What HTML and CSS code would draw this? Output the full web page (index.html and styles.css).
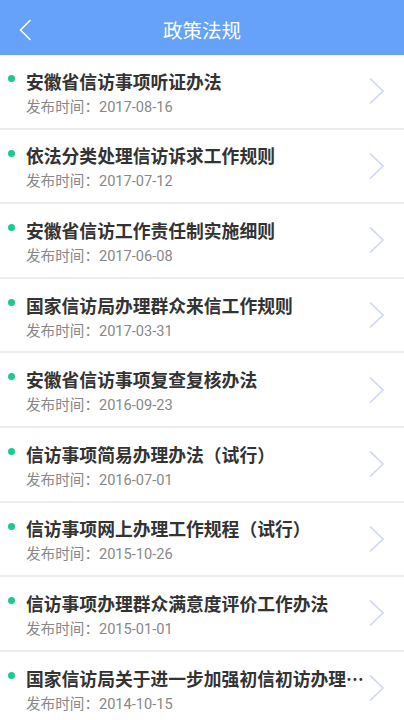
FILE: index.html
```html
<!DOCTYPE html>
<html lang="zh-CN">
<head>
<meta charset="utf-8">
<title>政策法规</title>
<link rel="stylesheet" href="styles.css">
</head>
<body>
<header class="topbar">
  <span class="back">
    <svg width="14" height="22" viewBox="0 0 14 22"><path d="M12 1.5 L2.5 11 L12 20.5" fill="none" stroke="#fff" stroke-width="1.6" stroke-linecap="round" stroke-linejoin="round"/></svg>
  </span>
  <h1 class="title">政策法规</h1>
</header>
<ul class="list">
  <li class="item"><div class="text"><div class="name">安徽省信访事项听证办法</div><div class="date">发布时间：2017-08-16</div></div><span class="chev"><svg width="17" height="28" viewBox="0 0 17 28"><path d="M2 1.5 L15 14 L2 26.5" fill="none" stroke="#cfd6f6" stroke-width="1.6"/></svg></span></li>
  <li class="item"><div class="text"><div class="name">依法分类处理信访诉求工作规则</div><div class="date">发布时间：2017-07-12</div></div><span class="chev"><svg width="17" height="28" viewBox="0 0 17 28"><path d="M2 1.5 L15 14 L2 26.5" fill="none" stroke="#cfd6f6" stroke-width="1.6"/></svg></span></li>
  <li class="item"><div class="text"><div class="name">安徽省信访工作责任制实施细则</div><div class="date">发布时间：2017-06-08</div></div><span class="chev"><svg width="17" height="28" viewBox="0 0 17 28"><path d="M2 1.5 L15 14 L2 26.5" fill="none" stroke="#cfd6f6" stroke-width="1.6"/></svg></span></li>
  <li class="item"><div class="text"><div class="name">国家信访局办理群众来信工作规则</div><div class="date">发布时间：2017-03-31</div></div><span class="chev"><svg width="17" height="28" viewBox="0 0 17 28"><path d="M2 1.5 L15 14 L2 26.5" fill="none" stroke="#cfd6f6" stroke-width="1.6"/></svg></span></li>
  <li class="item"><div class="text"><div class="name">安徽省信访事项复查复核办法</div><div class="date">发布时间：2016-09-23</div></div><span class="chev"><svg width="17" height="28" viewBox="0 0 17 28"><path d="M2 1.5 L15 14 L2 26.5" fill="none" stroke="#cfd6f6" stroke-width="1.6"/></svg></span></li>
  <li class="item"><div class="text"><div class="name">信访事项简易办理办法（试行）</div><div class="date">发布时间：2016-07-01</div></div><span class="chev"><svg width="17" height="28" viewBox="0 0 17 28"><path d="M2 1.5 L15 14 L2 26.5" fill="none" stroke="#cfd6f6" stroke-width="1.6"/></svg></span></li>
  <li class="item"><div class="text"><div class="name">信访事项网上办理工作规程（试行）</div><div class="date">发布时间：2015-10-26</div></div><span class="chev"><svg width="17" height="28" viewBox="0 0 17 28"><path d="M2 1.5 L15 14 L2 26.5" fill="none" stroke="#cfd6f6" stroke-width="1.6"/></svg></span></li>
  <li class="item"><div class="text"><div class="name">信访事项办理群众满意度评价工作办法</div><div class="date">发布时间：2015-01-01</div></div><span class="chev"><svg width="17" height="28" viewBox="0 0 17 28"><path d="M2 1.5 L15 14 L2 26.5" fill="none" stroke="#cfd6f6" stroke-width="1.6"/></svg></span></li>
  <li class="item"><div class="text"><div class="name">国家信访局关于进一步加强初信初访办理工作的办法</div><div class="date">发布时间：2014-10-15</div></div><span class="chev"><svg width="17" height="28" viewBox="0 0 17 28"><path d="M2 1.5 L15 14 L2 26.5" fill="none" stroke="#cfd6f6" stroke-width="1.6"/></svg></span></li>
</ul>
</body>
</html>
```
FILE: styles.css
```css
html, body {
  margin: 0;
  padding: 0;
  background: #fff;
  font-family: Roboto, "Noto Sans CJK SC", sans-serif;
  overflow: hidden;
}
.topbar {
  height: 55px;
  background: #66a2fa;
  display: flex;
  align-items: center;
  justify-content: center;
  position: relative;
  padding-top: 3px;
  box-sizing: border-box;
}
.back {
  position: absolute;
  left: 18px;
  top: 19px;
  display: flex;
}
.title {
  margin: 0;
  color: #fff;
  font-size: 19.5px;
  font-weight: normal;
  font-family: "Noto Sans CJK SC", sans-serif;
}
.list {
  list-style: none;
  margin: 0;
  padding: 0;
}
.item {
  display: flex;
  align-items: center;
  height: 74.6px;
  box-sizing: border-box;
  border-bottom: 2px solid #ececec;
  padding: 0 19px 0 26px;
  position: relative;
}
.item::before {
  content: "";
  position: absolute;
  left: 8px;
  top: 20px;
  width: 7px;
  height: 7px;
  border-radius: 50%;
  background: #1dc98d;
}
.text {
  flex: 1;
  min-width: 0;
  padding-top: 2px;
}
.name {
  font-family: "Noto Sans CJK SC", sans-serif;
  font-size: 17.8px;
  line-height: 26px;
  font-weight: bold;
  color: #333;
  white-space: nowrap;
  overflow: hidden;
  text-overflow: ellipsis;
  margin-right: 4px;
}
.date {
  margin-top: 3px;
  font-size: 14.6px;
  line-height: 20px;
  color: #888;
}
.chev {
  display: flex;
  flex-shrink: 0;
}
```
